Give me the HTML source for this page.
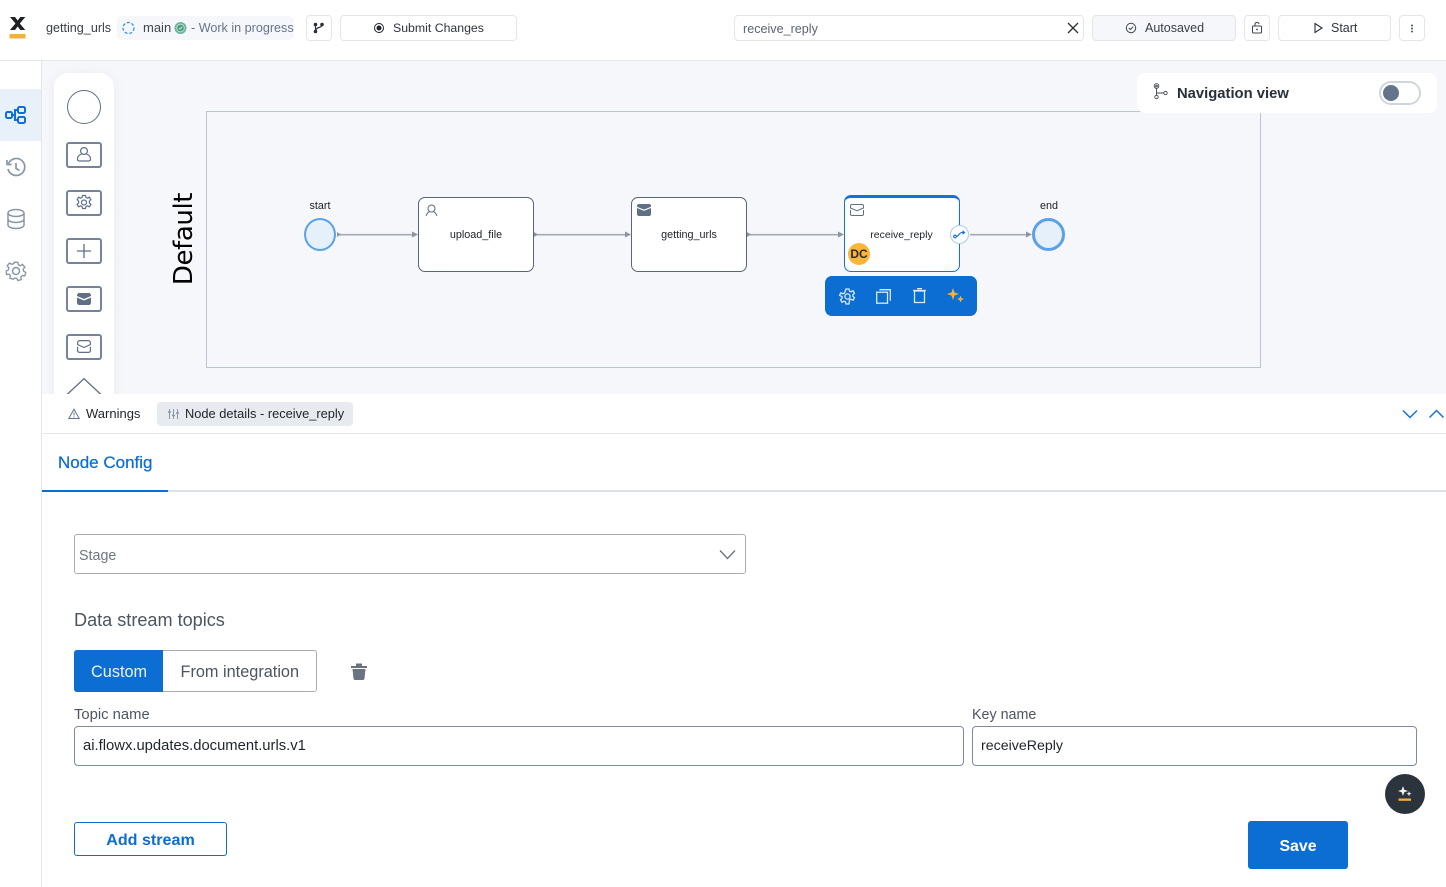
<!DOCTYPE html>
<html><head><meta charset="utf-8"><style>
*{box-sizing:border-box}
html,body{margin:0;padding:0}
body{width:1446px;height:887px;overflow:hidden;position:relative;background:#fff;font-family:"Liberation Sans",sans-serif;color:#2a3038}
.a{position:absolute}
.t{position:absolute;white-space:nowrap;line-height:1}
.btn{position:absolute;border:1px solid #e2e6ec;border-radius:4px;background:#fff;height:26px;top:15px}
svg{position:absolute;overflow:visible}
.pal{position:absolute;left:66px;width:36px;height:26px;border:2px solid #76849a;border-radius:3px}
.node{position:absolute;top:197px;width:116px;height:75px;background:#fff;border:1px solid #56667c;border-radius:7px}
.nt{position:absolute;top:229px;font-size:10.800px;line-height:12px;color:#1c2026;white-space:nowrap;transform:translateX(-50%)}
.in{position:absolute;background:#fff;border:1px solid #7d8ba0;border-radius:4px;height:40px}
</style></head><body>

<!-- canvas -->
<div class="a" style="left:42px;top:60px;width:1404px;height:334px;background:#f6f7fa"></div>
<div class="a" style="left:0;top:60px;width:1446px;height:1px;background:#e3e7ec"></div>
<div class="a" style="left:41px;top:60px;width:1px;height:827px;background:#e3e7ec"></div>

<!-- header -->
<svg style="left:9px;top:16px" width="17" height="24"><path d="M1 1h5l2.700 3.500L11.300 1h5l-5.500 6.500 5.500 6.500h-5L8.700 10.500 6 14H1l5.500-6.500z" fill="#1d2126"/><rect x="0.500" y="18" width="16" height="4.500" fill="#f5b335"/></svg>
<div class="t" style="left:46px;top:22px;font-size:12.600px;color:#3a4048">getting_urls</div>
<div class="a" style="left:117px;top:16px;width:177px;height:24px;border-radius:5px;background:#f5f7fa"></div>
<svg style="left:122px;top:21px" width="14" height="14"><circle cx="6.500" cy="7" r="5.500" fill="none" stroke="#2d8be8" stroke-width="1.200" stroke-dasharray="3 1.800"/></svg>
<div class="t" style="left:143px;top:21px;font-size:13px;color:#3f4650">main</div>
<svg style="left:174px;top:21px" width="14" height="14"><circle cx="6.500" cy="7" r="6" fill="#6cb59c"/><circle cx="6.500" cy="7" r="3.800" fill="#4d9d82" stroke="#c5e3d8" stroke-width=".8"/><path d="M4.800 7l1.300 1.200 2.200-2.400" stroke="#d6efe6" fill="none" stroke-width=".8"/></svg>
<div class="t" style="left:191px;top:22px;font-size:12.600px;color:#64748b">- Work in progress</div>
<div class="btn" style="left:306px;width:26px"></div>
<svg style="left:313px;top:22px" width="13" height="13"><g fill="#2a3038"><circle cx="2.500" cy="2.500" r="1.800"/><circle cx="2.500" cy="9.500" r="1.800"/><circle cx="9" cy="2.500" r="1.800"/></g><path d="M2.500 3v6M9 3c0 3-6 2-6 5" stroke="#2a3038" fill="none" stroke-width="1.200"/></svg>
<div class="btn" style="left:340px;width:177px"></div>
<svg style="left:373px;top:22px" width="12" height="12"><circle cx="6" cy="6" r="4.500" fill="none" stroke="#1e2328" stroke-width="1"/><circle cx="6" cy="6" r="2.500" fill="#1e2328"/></svg>
<div class="t" style="left:393px;top:22px;font-size:12.300px;color:#2f353d">Submit Changes</div>

<div class="btn" style="left:734px;width:350px"></div>
<div class="t" style="left:743px;top:23px;font-size:12.600px;color:#5b6470">receive_reply</div>
<svg style="left:1067px;top:22px" width="12" height="12"><path d="M1 1l10 10M11 1L1 11" stroke="#2a3038" stroke-width="1.300"/></svg>
<div class="btn" style="left:1092px;width:144px;background:#f5f7fa"></div>
<svg style="left:1125px;top:22px" width="12" height="12"><circle cx="6" cy="6" r="4.700" fill="none" stroke="#3f4650"/><path d="M3.800 6l1.600 1.500 2.800-2.800" fill="none" stroke="#3f4650"/></svg>
<div class="t" style="left:1145px;top:22px;font-size:12.500px;color:#3a4048">Autosaved</div>
<div class="btn" style="left:1244px;width:26px"></div>
<svg style="left:1251px;top:21px" width="12" height="14"><rect x="1.500" y="5" width="9" height="7" rx="1" fill="none" stroke="#3f4650"/><path d="M4 5V3c0-2 4-2 4 0" fill="none" stroke="#3f4650"/><circle cx="6" cy="8.500" r=".9" fill="#3f4650"/></svg>
<div class="btn" style="left:1278px;width:113px"></div>
<svg style="left:1313px;top:22px" width="11" height="12"><path d="M2 1.500l7 4.500-7 4.500z" fill="none" stroke="#2a3038" stroke-width="1.100"/></svg>
<div class="t" style="left:1331px;top:22px;font-size:12.500px;color:#2f353d">Start</div>
<div class="btn" style="left:1399px;width:26px"></div>
<svg style="left:1411px;top:24px" width="4" height="10"><circle cx="1" cy="1.500" r="1" fill="#4a5360"/><circle cx="1" cy="4.500" r="1" fill="#4a5360"/><circle cx="1" cy="7.500" r="1" fill="#4a5360"/></svg>

<!-- left rail -->
<div class="a" style="left:0;top:89px;width:41px;height:52px;background:#e8f0fa"></div>
<svg style="left:5px;top:106px" width="22" height="22" fill="none" stroke="#0f6fd6" stroke-width="2"><rect x="1" y="6" width="6" height="6" rx="1.500"/><rect x="13" y="1" width="7" height="6" rx="1.500"/><rect x="13" y="11" width="7" height="6" rx="1.500"/><path d="M7 9h3V4h3M10 9v5h3"/></svg>
<svg style="left:5px;top:157px" width="22" height="22" fill="none" stroke="#8896a8" stroke-width="1.700"><path d="M3.500 6.500A8.500 8.500 0 1 1 3 12"/><path d="M2 3v4.500h4.500M11 6v5.500l3.500 2"/></svg>
<svg style="left:6px;top:208px" width="20" height="22" fill="none" stroke="#8896a8" stroke-width="1.500"><ellipse cx="10" cy="5" rx="8" ry="3.500"/><path d="M2 5v12c0 2 3.500 3.500 8 3.500s8-1.500 8-3.500V5M2 11c0 2 3.500 3.500 8 3.500s8-1.500 8-3.500"/></svg>
<svg style="left:5px;top:260px" width="22" height="22" fill="none" stroke="#8896a8" stroke-width="1.500"><circle cx="11" cy="11" r="3.500"/><path d="M9 1.500h4l.6 2.800 2 .9 2.500-1.500 2.600 3.100-1.800 2.200.4 2.200 2.500 1.300-1.200 3.800-2.800-.3-1.500 1.700.5 2.800-3.800.9-1.300-2.500h-2.200L8 20l-3.700-1 .5-2.800-1.500-1.700-2.800.3L.3 11l2.400-1.300.4-2.200-1.800-2.200 2.600-3.100L6.400 3.700l2-.9z" transform="translate(1 1) scale(.91)"/></svg>

<!-- palette -->
<div class="a" style="left:54px;top:73px;width:60px;height:330px;background:#fff;border-radius:14px 14px 0 0;box-shadow:0 2px 12px rgba(90,105,130,.09)"></div>
<div class="a" style="left:67px;top:90px;width:34px;height:34px;border:1.300px solid #5f6f86;border-radius:50%"></div>
<div class="pal" style="top:142px"></div>
<svg style="left:76px;top:146px" width="16" height="17" fill="none" stroke="#5f6f86" stroke-width="1.200"><circle cx="8" cy="5" r="3.400"/><path d="M5.600 8C3 9 1.500 10.500 1.500 13c0 1.500 1 2 2 2h9c1 0 2-.5 2-2 0-2.500-1.500-4-4-5"/></svg>
<div class="pal" style="top:190px"></div>
<svg style="left:76px;top:194px" width="16" height="17" fill="none" stroke="#5f6f86" stroke-width="1.200"><circle cx="8" cy="8.500" r="2.500"/><path d="M6.500 1.500h3l.5 2 1.500.7 1.900-1 1.500 2.500-1.500 1.400v1.800l1.500 1.400-1.500 2.500-1.900-1-1.500.7-.5 2h-3l-.5-2-1.500-.7-1.900 1-1.500-2.500 1.500-1.400V7.100L1.100 5.700l1.500-2.500 1.900 1 1.500-.7z"/></svg>
<div class="pal" style="top:238px"></div>
<svg style="left:77px;top:244px" width="14" height="14"><path d="M7 0v14M0 7h14" stroke="#5f6f86" stroke-width="1.300"/></svg>
<div class="pal" style="top:286px"></div>
<svg style="left:77px;top:293px" width="14" height="12"><path d="M0 2.500C0 1 1 0 2.500 0h9C13 0 14 1 14 2.500v.5L7 6 0 3z" fill="#5f6f86"/><path d="M0 4.500L7 7.500l7-3v5c0 1.500-1 2.500-2.500 2.500h-9C1 12 0 11 0 9.500z" fill="#5f6f86"/></svg>
<div class="pal" style="top:334px"></div>
<svg style="left:77px;top:340px" width="14" height="13" fill="none" stroke="#5f6f86" stroke-width="1.200"><path d="M.6 4.500V3C.6 1.500 1.500.6 3 .6h8c1.500 0 2.400.9 2.400 2.400v1.500L7 7.500zM.6 6.800v3.600c0 1.300.9 2 2.400 2h8c1.500 0 2.400-.7 2.400-2V6.800"/></svg>
<svg style="left:66px;top:378px" width="36" height="18"><path d="M0.500 17L18 0.700 35.500 17" fill="none" stroke="#5f6f86" stroke-width="1.300"/></svg>

<!-- diagram -->
<div class="a" style="left:206px;top:111px;width:1055px;height:257px;border:1px solid #bcc4d2"></div>
<div class="t" style="left:184px;top:239px;font-size:26px;color:#000;transform:translate(-50%,-50%) rotate(-90deg);font-family:'DejaVu Sans',sans-serif;letter-spacing:-.4px">Default</div>

<svg style="left:0;top:0" width="1446" height="400">
<g stroke="#a4abb6" stroke-width="1.600" fill="none"><path d="M337 234.700H413M534 234.700H626M747 234.700H838M970 234.700H1027"/></g>
<g fill="#8d95a1"><path d="M412 231.500l6 3-6 3zM625 231.500l6 3-6 3zM838 231.500l6 3-6 3zM1026 231.500l6 3-6 3z"/><path d="M337 232l4 2.500-4 2.500zM534 232l4 2.500-4 2.500zM747 232l4 2.500-4 2.500z"/></g>
</svg>

<div class="t" style="left:320px;top:201px;font-size:10.800px;color:#1c2026;transform:translateX(-50%)">start</div>
<div class="a" style="left:304px;top:218px;width:32px;height:33px;border-radius:50%;background:#e6f0fb;border:2px solid #5aa2e8"></div>
<div class="t" style="left:1049px;top:201px;font-size:10.800px;color:#1c2026;transform:translateX(-50%)">end</div>
<div class="a" style="left:1032px;top:218px;width:33px;height:33px;border-radius:50%;background:#e6f0fb;border:3px solid #5aa2e8"></div>

<div class="node" style="left:418px"></div>
<svg style="left:425px;top:204px" width="14" height="14" fill="none" stroke="#5f6f86" stroke-width="1"><circle cx="6.500" cy="4.500" r="3.500"/><path d="M1 12c1-2.500 2.500-4 3.500-4.500M12 12c-1-2.500-2.500-4-3.500-4.500"/></svg>
<div class="nt" style="left:476px">upload_file</div>

<div class="node" style="left:631px"></div>
<svg style="left:637px;top:204px" width="14" height="12"><path d="M0 2C0 .8 .8 0 2 0h10c1.200 0 2 .8 2 2v.8L7 5.600 0 2.800z" fill="#5f6f86"/><path d="M0 4l7 2.900L14 4v6c0 1.200-.8 2-2 2H2c-1.200 0-2-.8-2-2z" fill="#5f6f86"/></svg>
<div class="nt" style="left:689px">getting_urls</div>

<div class="node" style="left:844px;top:195px;width:115.500px;height:77px;border:1.300px solid #1272d8;border-top:3px solid #1272d8"></div>
<svg style="left:850px;top:204px" width="14" height="12" fill="none" stroke="#5f6f86" stroke-width="1"><path d="M.5 4V2C.5 1 1.200.5 2 .5h10c.8 0 1.500.5 1.500 1.500v2L7 6.700zM.5 6v4c0 1 .7 1.500 1.500 1.500h10c.8 0 1.500-.5 1.500-1.500V6"/></svg>
<div class="nt" style="left:901.500px;font-size:10.500px">receive_reply</div>
<div class="a" style="left:848px;top:243px;width:22px;height:22px;border-radius:50%;background:#fbb63a;color:#2a2a2a;font-weight:bold;font-size:12px;line-height:22px;text-align:center">DC</div>
<div class="a" style="left:950px;top:225px;width:19px;height:19px;border-radius:50%;background:#fff;border:1px solid #a8cdf2"></div>
<svg style="left:953px;top:230px" width="13" height="9" fill="none" stroke="#0f6fd6" stroke-width="1.100"><circle cx="2" cy="6.500" r="1.300"/><path d="M3.300 6.500C6 6.500 6 2.500 9 2.500h2M9.500.8L11.500 2.500 9.500 4.200"/></svg>

<div class="a" style="left:825px;top:276px;width:152px;height:40px;background:#0c6ed3;border-radius:7px"></div>
<svg style="left:839px;top:288px" width="17" height="17" fill="none" stroke="#dbe9f9" stroke-width="1.300"><circle cx="8.500" cy="8.500" r="2.600"/><path d="M7 1h3l.5 2.100 1.600.7 1.900-1.100 1.500 2.600-1.600 1.400v1.600l1.600 1.400-1.500 2.600-1.900-1.100-1.600.7L10 16H7l-.5-2.100-1.600-.7-1.900 1.100-1.500-2.600 1.600-1.400V8.700L.5 7.300 2 4.700l1.900 1.100 1.600-.7z" stroke-linejoin="round"/></svg>
<svg style="left:876px;top:289px" width="15" height="15" fill="none" stroke="#dbe9f9" stroke-width="1.300"><rect x=".7" y="3.200" width="10.800" height="11"/><path d="M3.500.7h10.800v11"/></svg>
<svg style="left:913px;top:288px" width="13" height="15" fill="none" stroke="#dbe9f9" stroke-width="1.300"><rect x="1.500" y="3" width="10" height="11.500"/><path d="M0 2.500h13M4 .7h5"/></svg>
<svg style="left:947px;top:288px" width="18" height="16" fill="#f5b335"><path d="M6 0l1.500 4.500L12 6 7.500 7.500 6 12 4.500 7.500 0 6l4.500-1.500zM13.500 7.500l1 2.500 2.500 1-2.500 1-1 2.500-1-2.500-2.500-1 2.500-1z"/></svg>

<!-- nav view -->
<div class="a" style="left:1137px;top:73px;width:300px;height:40px;background:#fff;border-radius:8px"></div>
<svg style="left:1153px;top:83px" width="16" height="17" fill="none" stroke="#3f4650" stroke-width=".9"><circle cx="3.500" cy="3" r="2.300"/><circle cx="3.500" cy="3" r=".8"/><circle cx="3.500" cy="14" r="1.700"/><circle cx="12.500" cy="10" r="1.700"/><path d="M3.500 5.300v7M3.500 10h7.300"/></svg>
<div class="t" style="left:1177px;top:86px;font-size:14.800px;font-weight:bold;color:#2a3038;padding-top:1px">Navigation view</div>
<div class="a" style="left:1379px;top:81px;width:42px;height:24px;border:2px solid #d0d6df;border-radius:12px;background:#fff"></div>
<div class="a" style="left:1383px;top:85px;width:16px;height:16px;border-radius:50%;background:#64748b"></div>

<!-- details panel -->
<div class="a" style="left:42px;top:394px;width:1404px;height:493px;background:#fff"></div>
<div class="a" style="left:42px;top:433px;width:1404px;height:1px;background:#e6e8ec"></div>
<svg style="left:68px;top:408px" width="12" height="12"><path d="M6 1.200L11.200 10.500H.8z" fill="none" stroke="#64748b" stroke-width="1"/><path d="M6 4.500v3M6 8.500v1" stroke="#64748b"/></svg>
<div class="t" style="left:86px;top:407px;font-size:13px;color:#1f242b">Warnings</div>
<div class="a" style="left:157px;top:402px;width:196px;height:24px;border-radius:4px;background:#e7eaef"></div>
<svg style="left:168px;top:408px" width="11" height="12" stroke="#8a97a8" stroke-width="1"><path d="M1.500 1v10M5.500 1v10M9.500 1v10"/><path d="M0 4h3M4 7.500h3M8 5h3" stroke-width="1.400"/></svg>
<div class="t" style="left:185px;top:408px;font-size:12.850px;color:#1f242b">Node details - receive_reply</div>
<svg style="left:1402px;top:409px" width="44" height="11" fill="none" stroke="#1272d8" stroke-width="1.500"><path d="M1 1.500l7 7 7-7M27.500 8.500l7-7 7 7"/></svg>

<div class="t" style="left:58px;top:454px;font-size:17px;color:#0c6ed3;-webkit-text-stroke:.25px #0c6ed3">Node Config</div>
<div class="a" style="left:42px;top:490px;width:1404px;height:2px;background:#dfe3e8"></div>
<div class="a" style="left:42px;top:490px;width:126px;height:2px;background:#0c6ed3"></div>

<div class="a" style="left:74px;top:534px;width:672px;height:40px;border:1px solid #a8acb2;border-radius:3px"></div>
<div class="t" style="left:79px;top:549px;font-size:14.300px;color:#6f7680">Stage</div>
<svg style="left:719px;top:549px" width="17" height="11"><path d="M1 1.500l7.500 8 7.500-8" fill="none" stroke="#70767e" stroke-width="1.400"/></svg>

<div class="t" style="left:74px;top:611px;font-size:18.100px;color:#4c5560">Data stream topics</div>
<div class="a" style="left:74px;top:650px;width:243px;height:42px;border:1px solid #a8acb2;border-radius:3px;background:#fff"></div>
<div class="a" style="left:74px;top:650px;width:89px;height:42px;border-radius:3px 0 0 3px;background:#0c6ed3"></div>
<div class="t" style="left:91px;top:664px;font-size:16.300px;color:#e9f2fc">Custom</div>
<div class="t" style="left:180.500px;top:664px;font-size:16.300px;color:#4c5560">From integration</div>
<svg style="left:351px;top:663px" width="16" height="17" fill="#6b7280"><path d="M0 3h16v2H0zM5 0.500h6V3H5zM1.500 6h13l-1 9.500c0 .8-.7 1.500-1.500 1.500H4c-.8 0-1.500-.7-1.500-1.500z"/></svg>

<div class="t" style="left:74px;top:708px;font-size:14.800px;color:#4c5560">Topic name</div>
<div class="in" style="left:74px;top:726px;width:890px"></div>
<div class="t" style="left:83px;top:739px;font-size:14.800px;color:#1f242b">ai.flowx.updates.document.urls.v1</div>
<div class="t" style="left:972px;top:708px;font-size:14.300px;color:#4c5560">Key name</div>
<div class="in" style="left:972px;top:726px;width:445px"></div>
<div class="t" style="left:981px;top:739px;font-size:14.200px;color:#1f242b">receiveReply</div>

<div class="a" style="left:1385px;top:774px;width:40px;height:40px;border-radius:50%;background:#2b333d"></div>
<svg style="left:1398px;top:786px" width="15" height="16"><path d="M5 0l1.300 3.700L10 5 6.300 6.300 5 10 3.700 6.300 0 5l3.700-1.300zM11 5l.7 2 2 .7-2 .7-.7 2-.7-2-2-.7 2-.7z" fill="#f2f3f5"/><rect x="0.500" y="12.500" width="12.500" height="2.300" fill="#f5b335"/></svg>

<div class="a" style="left:74px;top:822px;width:153px;height:34px;border:1px solid #0c6ed3;border-radius:3px;color:#0c6ed3;font-weight:bold;font-size:16.100px;line-height:35px;text-align:center">Add stream</div>
<div class="a" style="left:1248px;top:821px;width:100px;height:48px;background:#0c6ed3;border-radius:3px;color:#fff;font-weight:bold;font-size:15.900px;line-height:51px;text-align:center">Save</div>
</body></html>
